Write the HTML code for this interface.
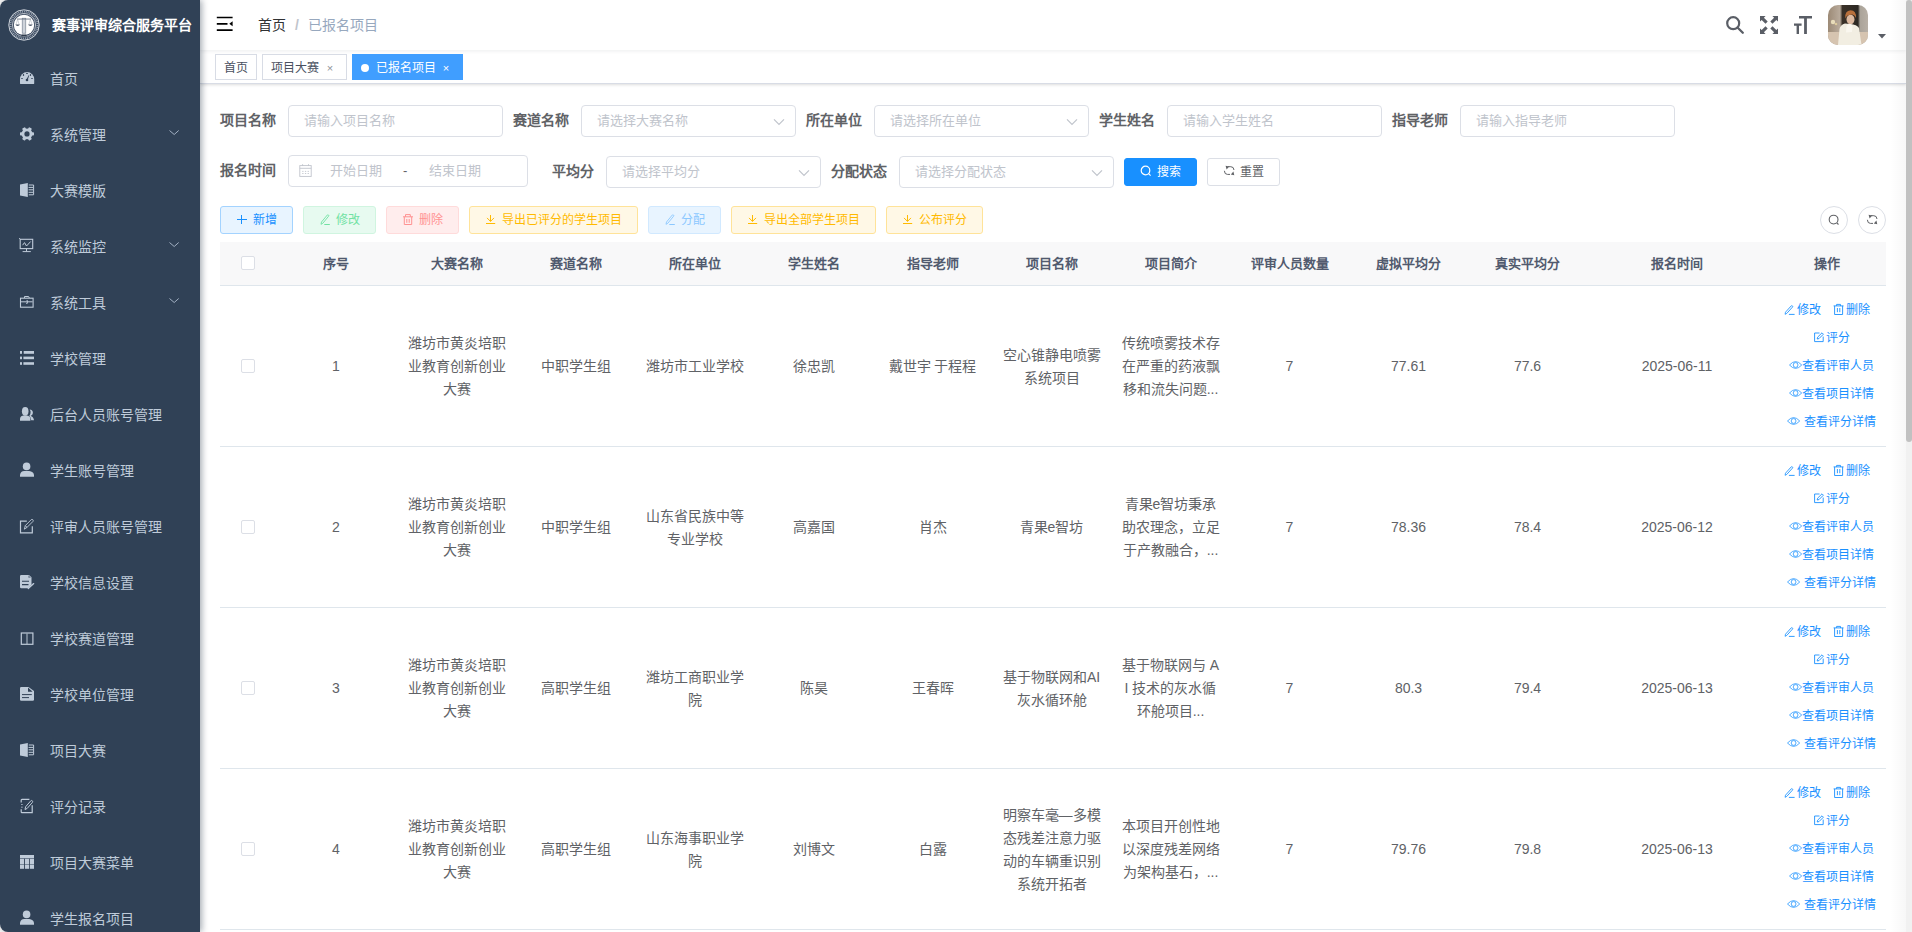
<!DOCTYPE html>
<html lang="zh-CN"><head><meta charset="utf-8">
<style>
*{box-sizing:border-box;margin:0;padding:0}
html,body{width:1912px;height:932px;overflow:hidden;background:#f5f5f5}
body{font-family:"Liberation Sans",sans-serif;font-size:14px;color:#606266;position:relative}
.abs{position:absolute}
#sidebar{position:absolute;left:0;top:0;width:200px;height:932px;background:#304156;border-radius:8px 0 0 8px;box-shadow:2px 0 6px rgba(0,21,41,.35);z-index:3}
#sidebar .logo{position:absolute;left:8px;top:9px;width:32px;height:32px}
#sidebar .title{position:absolute;left:52px;top:0;height:50px;line-height:50px;color:#fff;font-weight:600;font-size:14px;white-space:nowrap}
.mi{position:absolute;left:0;width:200px;height:56px;line-height:56px;color:#bfcbd9;font-size:14px}
.mi .ic{position:absolute;left:16px;top:17px;width:22px;height:22px}
.mi .tx{position:absolute;left:50px;top:1px}
.mi .arr{position:absolute;left:168px;top:23px;width:12px;height:8px}
#main{position:absolute;left:200px;top:0;width:1706px;height:932px;background:#fff;overflow:hidden}
#scroll{position:absolute;left:1906px;top:0;width:6px;height:932px;background:#f1f1f1}
#scroll .th{position:absolute;left:0;top:0;width:6px;height:442px;background:#c1c1c1;border-radius:3px}

#navbar{position:absolute;left:0;top:0;width:1706px;height:50px;background:#fff;box-shadow:0 1px 4px rgba(0,21,41,.08);z-index:2}
#navbar .bc{position:absolute;left:58px;top:0;line-height:50px;font-size:14px;white-space:nowrap}
#navbar .sep{margin:0 9px;color:#c0c4cc;font-weight:700}
#navbar .avatar{position:absolute;left:1628px;top:5px;width:40px;height:40px;border-radius:10px;background:linear-gradient(90deg,#8a7a66 0%,#c8b59c 20%,#f0ebe0 45%,#efe9dc 60%,#9c8f7c 85%,#6f6658 100%)}
#tags{position:absolute;left:0;top:50px;width:1706px;height:34px;background:#fff;border-bottom:1px solid #d8dce5;box-shadow:0 1px 3px 0 rgba(0,0,0,.12),0 0 3px 0 rgba(0,0,0,.04);z-index:1}
.tag{position:absolute;top:4px;height:26px;line-height:25px;padding-top:1px;border:1px solid #d8dce5;color:#495060;background:#fff;font-size:12px;padding-left:8px;white-space:nowrap}
.tag .x{display:inline-block;width:16px;text-align:center;margin-left:3px;color:#909399;font-size:11px;line-height:24px;vertical-align:top}
.tag.act{background:#409eff;border-color:#409eff;color:#fff}
.tag.act .x{color:#fff}
.tag .dot{display:inline-block;width:8px;height:8px;border-radius:50%;background:#fff;margin-right:7px;vertical-align:0}

.lbl{position:absolute;height:32px;line-height:32px;font-size:14px;font-weight:700;color:#606266;white-space:nowrap}
.inp{position:absolute;height:32px;line-height:30px;border:1px solid #dcdfe6;border-radius:4px;background:#fff;color:#c0c4cc;font-size:13px;padding-left:15px;white-space:nowrap}
.inp .chev{position:absolute;right:10px;top:12px}
.btn{position:absolute;height:28px;line-height:26px;border:1px solid;border-radius:3px;font-size:12px;text-align:center;white-space:nowrap}
.btn .bi{display:inline-block;vertical-align:-1px;margin-right:5px}
.circ{position:absolute;width:28px;height:28px;border:1px solid #dcdfe6;border-radius:50%;background:#fff}

#table{position:absolute;left:20px;top:0;width:1666px;height:932px}
#thead{position:absolute;left:0;top:242px;width:1666px;height:44px;background:#f8f8f9;border-bottom:1px solid #dfe6ec}
.th{position:absolute;top:0;height:43px;line-height:43px;text-align:center;font-size:13px;font-weight:700;color:#515a6e;white-space:nowrap}
.cb{position:absolute;width:14px;height:14px;border:1px solid #dcdfe6;border-radius:2px;background:#fff}
.tr{position:absolute;left:0;width:1666px;height:161px;border-bottom:1px solid #dfe6ec}
.td{position:absolute;line-height:23px;text-align:center;font-size:14px;color:#606266;white-space:nowrap}
.op{position:absolute;box-sizing:border-box;width:119px;height:20px;line-height:20px;text-align:center;font-size:12px;color:#1890ff;white-space:nowrap}
.op svg{display:inline-block;vertical-align:-1px;margin-right:1px}
</style></head><body>
<div id="sidebar">
  <svg class="logo" viewBox="0 0 32 32"><circle cx="16" cy="16" r="15.8" fill="#3b4a5f"/><circle cx="16" cy="16" r="15.2" fill="none" stroke="#dfe4ea" stroke-width="0.9"/><circle cx="16" cy="16" r="13.4" fill="none" stroke="#9ba6b4" stroke-width="2" stroke-dasharray="0.9 1"/><circle cx="16" cy="16" r="11.6" fill="none" stroke="#e6eaef" stroke-width="0.7"/><circle cx="16" cy="16" r="10.2" fill="#fff"/><rect x="14.2" y="9.2" width="3.6" height="15" fill="#cfd4db" stroke="#6f7a89" stroke-width="0.6"/><rect x="9" y="9.6" width="14" height="0.9" fill="#6d7786"/><path d="M9.6 10.3 L8 15.6 M9.6 10.3 L11.2 15.6 M22.4 10.3 L20.8 15.6 M22.4 10.3 L24 15.6" stroke="#9aa3af" stroke-width="0.45"/><path d="M7.4 15.6 H11.8 Q11.4 17 9.6 17 Q7.8 17 7.4 15.6Z M20.2 15.6 H24.6 Q24.2 17 22.4 17 Q20.6 17 20.2 15.6Z" fill="#4a5566"/><path d="M14 25.6 H18 L19 27.6 H13Z" fill="#2f3b4c"/></svg>
  <div class="title">赛事评审综合服务平台</div>
<div class="mi" style="top:50px"><svg class="ic" viewBox="0 0 22 22"><path d="M4 16.6 L4 12.2 A7.1 7.1 0 0 1 18.2 12.2 L18.2 16.6 Q18.2 17 17.8 17 L4.4 17 Q4 17 4 16.6Z" fill="#bfcbd9"/><g fill="#304156"><ellipse cx="6" cy="11.5" rx="0.9" ry="0.6"/><ellipse cx="7.5" cy="8" rx="0.7" ry="0.9"/><ellipse cx="11" cy="6.4" rx="0.9" ry="0.6"/><ellipse cx="14.5" cy="8" rx="0.7" ry="0.9"/><ellipse cx="16" cy="11.5" rx="0.9" ry="0.6"/><circle cx="11" cy="13" r="1.3"/><path d="M10.4 12.8 L12.6 8.3 L13.2 8.5 L11.6 13.2Z"/></g></svg><span class="tx">首页</span></div>
<div class="mi" style="top:106px"><svg class="ic" viewBox="0 0 22 22"><g fill="#bfcbd9"><rect x="9.3" y="3.9" width="3.4" height="4" rx="0.8" transform="rotate(30 11 10.9)"/><rect x="9.3" y="3.9" width="3.4" height="4" rx="0.8" transform="rotate(90 11 10.9)"/><rect x="9.3" y="3.9" width="3.4" height="4" rx="0.8" transform="rotate(150 11 10.9)"/><rect x="9.3" y="3.9" width="3.4" height="4" rx="0.8" transform="rotate(210 11 10.9)"/><rect x="9.3" y="3.9" width="3.4" height="4" rx="0.8" transform="rotate(270 11 10.9)"/><rect x="9.3" y="3.9" width="3.4" height="4" rx="0.8" transform="rotate(330 11 10.9)"/><circle cx="11" cy="10.9" r="5.4"/></g><circle cx="11" cy="10.9" r="2.6" fill="#304156"/></svg><span class="tx">系统管理</span><svg class="arr" viewBox="0 0 12 8"><path d="M1.5 1.5 L6.2 5.5 L10.7 1.5" fill="none" stroke="#a3b1c4" stroke-width="1"/></svg></div>
<div class="mi" style="top:162px"><svg class="ic" viewBox="0 0 22 22"><path d="M4 5.5 L11.8 4 L11.8 18 L4 16.6Z" fill="#bfcbd9"/><path d="M12.8 6 H17.6 V15.8 H12.8" fill="none" stroke="#bfcbd9" stroke-width="1"/><path d="M12.6 8.4 H17 M12.6 10.8 H17 M12.6 13.3 H17" stroke="#bfcbd9" stroke-width="1"/></svg><span class="tx">大赛模版</span></div>
<div class="mi" style="top:218px"><svg class="ic" viewBox="0 0 22 22"><rect x="4.2" y="4.3" width="12.5" height="9.3" fill="none" stroke="#bfcbd9" stroke-width="1.1"/><path d="M3.2 3 L4.2 4.3" stroke="#bfcbd9" stroke-width="0.9"/><path d="M6.6 10.2 L8.5 7.6 L10.5 11 L14.7 6.5" fill="none" stroke="#bfcbd9" stroke-width="1"/><path d="M10.5 13.6 V16.4 M6.6 16.6 H14.8" stroke="#bfcbd9" stroke-width="1"/></svg><span class="tx">系统监控</span><svg class="arr" viewBox="0 0 12 8"><path d="M1.5 1.5 L6.2 5.5 L10.7 1.5" fill="none" stroke="#a3b1c4" stroke-width="1"/></svg></div>
<div class="mi" style="top:274px"><svg class="ic" viewBox="0 0 22 22"><rect x="4.5" y="7.2" width="12.6" height="9" fill="none" stroke="#bfcbd9" stroke-width="1.1"/><path d="M8.5 7 V5.5 H12.6 L13.3 7" fill="none" stroke="#bfcbd9" stroke-width="1"/><path d="M5 10.8 H16.6" stroke="#bfcbd9" stroke-width="1"/><path d="M10.6 9.5 H11.4 V12.3 H10" fill="none" stroke="#bfcbd9" stroke-width="0.9"/></svg><span class="tx">系统工具</span><svg class="arr" viewBox="0 0 12 8"><path d="M1.5 1.5 L6.2 5.5 L10.7 1.5" fill="none" stroke="#a3b1c4" stroke-width="1"/></svg></div>
<div class="mi" style="top:330px"><svg class="ic" viewBox="0 0 22 22"><g fill="#bfcbd9"><rect x="4" y="4" width="2" height="2.8"/><rect x="7.7" y="4" width="10.3" height="2.8"/><rect x="4" y="9.6" width="2" height="2.6"/><rect x="7.4" y="9.6" width="10.6" height="2.6"/><rect x="4" y="15.2" width="2" height="2.6"/><rect x="7.4" y="15.2" width="10.6" height="2.6"/></g></svg><span class="tx">学校管理</span></div>
<div class="mi" style="top:386px"><svg class="ic" viewBox="0 0 22 22"><g fill="#bfcbd9"><ellipse cx="9.2" cy="8.3" rx="3.3" ry="4.4"/><path d="M4 17.8 L4 15.5 Q4.5 12.8 8 12.6 L10.6 12.6 Q14 12.9 14.4 15.5 L14.4 17.8Z"/><path d="M13.6 6.6 Q16.9 6.9 16.9 10 Q16.8 12.2 14.6 12.9 Q17.6 13.8 18 17.2 L15.2 17.2 Q15 14.6 13.3 13 Q14.8 11 14.6 8.8 Q14.4 7.4 13.6 6.6Z"/></g></svg><span class="tx">后台人员账号管理</span></div>
<div class="mi" style="top:442px"><svg class="ic" viewBox="0 0 22 22"><g fill="#bfcbd9"><circle cx="10.6" cy="7.4" r="3.8"/><path d="M4 17.8 L4 16 Q4.6 12.3 8.2 12.1 L13.2 12.1 Q17.4 12.5 18 16 L18 17.8Z"/></g></svg><span class="tx">学生账号管理</span></div>
<div class="mi" style="top:498px"><svg class="ic" viewBox="0 0 22 22"><path d="M10.8 6.2 H4.5 V17.8 H16.3 V11.2" fill="none" stroke="#bfcbd9" stroke-width="1.2"/><path d="M8.3 14.2 L9.3 10.6 L15.3 4.6 Q16 4 16.8 4.7 Q17.6 5.6 17 6.4 L11 12.4 Z M9.4 10.6 L11 12.4" fill="none" stroke="#bfcbd9" stroke-width="0.9" stroke-linejoin="round"/></svg><span class="tx">评审人员账号管理</span></div>
<div class="mi" style="top:554px"><svg class="ic" viewBox="0 0 22 22"><path d="M5.2 4 H13 L15.5 6.2 V13.5 L12.5 17.2 H5.2 Q4 17.2 4 16 V5.2 Q4 4 5.2 4Z" fill="#bfcbd9"/><path d="M6 10.2 H13 M6 13.6 H12.5" stroke="#304156" stroke-width="1.1"/><path d="M12.3 17.6 L17.7 12.6" stroke="#bfcbd9" stroke-width="1.3" stroke-linecap="round"/><path d="M12.4 4.3 V6.8 H15" fill="#304156" opacity="0.6"/></svg><span class="tx">学校信息设置</span></div>
<div class="mi" style="top:610px"><svg class="ic" viewBox="0 0 22 22"><rect x="5.3" y="6" width="11.6" height="11.3" fill="none" stroke="#bfcbd9" stroke-width="1.2"/><path d="M11 6.5 V17" stroke="#bfcbd9" stroke-width="1.2" opacity="0.8"/></svg><span class="tx">学校赛道管理</span></div>
<div class="mi" style="top:666px"><svg class="ic" viewBox="0 0 22 22"><path d="M5.2 4 H12.5 L18 8 V16.6 Q18 17.8 16.8 17.8 H5.2 Q4 17.8 4 16.6 V5.2 Q4 4 5.2 4Z" fill="#bfcbd9"/><path d="M12 4.6 L12 8.8 L16.6 8.8Z" fill="#304156"/><path d="M6 11.6 H15.8 M6 14.6 H13" stroke="#304156" stroke-width="1"/></svg><span class="tx">学校单位管理</span></div>
<div class="mi" style="top:722px"><svg class="ic" viewBox="0 0 22 22"><path d="M4 5.5 L11.8 4 L11.8 18 L4 16.6Z" fill="#bfcbd9"/><path d="M12.8 6 H17.6 V15.8 H12.8" fill="none" stroke="#bfcbd9" stroke-width="1"/><path d="M12.6 8.4 H17 M12.6 10.8 H17 M12.6 13.3 H17" stroke="#bfcbd9" stroke-width="1"/></svg><span class="tx">项目大赛</span></div>
<div class="mi" style="top:778px"><svg class="ic" viewBox="0 0 22 22"><path d="M13.4 4.3 H6 Q5.2 4.3 5.2 5.2 V7.5 M5.2 14.2 V16.8 Q5.2 17.7 6 17.7 H16.2 V10.2" fill="none" stroke="#bfcbd9" stroke-width="1.2"/><path d="M5 9.5 H6.8 M5 12.2 H6.8" stroke="#bfcbd9" stroke-width="1" opacity="0.7"/><path d="M9 14.5 L9.6 11.8 L14.8 5.8 Q15.5 5.1 16.3 5.8 Q17 6.6 16.4 7.4 L11.2 13.4Z" fill="none" stroke="#bfcbd9" stroke-width="1" stroke-linejoin="round"/></svg><span class="tx">评分记录</span></div>
<div class="mi" style="top:834px"><svg class="ic" viewBox="0 0 22 22"><g fill="#bfcbd9"><rect x="4" y="4" width="14" height="3.3"/><rect x="4" y="7.8" width="4.1" height="5.6"/><rect x="9" y="7.8" width="4.1" height="5.6"/><rect x="13.9" y="7.8" width="4.1" height="5.6"/><rect x="4" y="13.8" width="4.1" height="4"/><rect x="9" y="13.8" width="4.1" height="4"/><rect x="13.9" y="13.8" width="4.1" height="4"/></g></svg><span class="tx">项目大赛菜单</span></div>
<div class="mi" style="top:890px"><svg class="ic" viewBox="0 0 22 22"><g fill="#bfcbd9"><circle cx="10.6" cy="7.4" r="3.8"/><path d="M4 17.8 L4 16 Q4.6 12.3 8.2 12.1 L13.2 12.1 Q17.4 12.5 18 16 L18 17.8Z"/></g></svg><span class="tx">学生报名项目</span></div>
</div>
<div id="main">
  <!-- navbar -->
  <div id="navbar">
    <svg class="abs" style="left:16px;top:16px" width="18" height="16" viewBox="0 0 18 16"><path d="M0.8 1.5 H16.6 M0.8 7.8 H11.5 M0.8 14.2 H16.6" stroke="#000" stroke-width="1.7"/><path d="M16.6 5.3 L13.3 7.8 L16.6 10.3Z" fill="#000"/></svg>
    <div class="bc"><span style="color:#303133">首页</span><span class="sep">/</span><span style="color:#97a8be">已报名项目</span></div>
    <svg class="abs" style="left:1525px;top:15px" width="20" height="20" viewBox="0 0 20 20"><circle cx="8.2" cy="8.2" r="6" fill="none" stroke="#5a5e66" stroke-width="2.2"/><path d="M12.5 12.5 L17.8 17.8" stroke="#5a5e66" stroke-width="2.3" stroke-linecap="round"/></svg>
    <svg class="abs" style="left:1559px;top:15px" width="20" height="20" viewBox="0 0 20 20"><g fill="#5a5e66"><path d="M1 1 H6.6 L4.9 2.7 L8.7 6.5 L6.5 8.7 L2.7 4.9 L1 6.6Z"/><path d="M19 1 V6.6 L17.3 4.9 L13.5 8.7 L11.3 6.5 L15.1 2.7 L13.4 1Z"/><path d="M1 19 V13.4 L2.7 15.1 L6.5 11.3 L8.7 13.5 L4.9 17.3 L6.6 19Z"/><path d="M19 19 H13.4 L15.1 17.3 L11.3 13.5 L13.5 11.3 L17.3 15.1 L19 13.4Z"/></g></svg>
    <svg class="abs" style="left:1593px;top:15px" width="20" height="20" viewBox="0 0 20 20"><g fill="#5a5e66"><path d="M6 1 H19 V3.6 H13.9 V19 H11.1 V3.6 H6Z"/><path d="M1 8.6 H8.6 V10.8 H6 V19 H3.6 V10.8 H1Z"/></g></svg>
    <svg class="abs" style="left:1628px;top:5px" width="40" height="40" viewBox="0 0 40 40"><defs><clipPath id="avc"><rect x="0" y="0" width="40" height="40" rx="10"/></clipPath><linearGradient id="avbg" x1="0" x2="1" y1="0" y2="0"><stop offset="0" stop-color="#9c8a76"/><stop offset="0.3" stop-color="#b9ab9c"/><stop offset="0.36" stop-color="#3a3128"/><stop offset="0.75" stop-color="#2c2823"/><stop offset="0.8" stop-color="#aaa399"/><stop offset="1" stop-color="#b8b0a6"/></linearGradient></defs><g clip-path="url(#avc)"><rect width="40" height="40" fill="url(#avbg)"/><rect x="0" y="27" width="40" height="13" fill="#d6c4b0"/><circle cx="5" cy="17" r="2.2" fill="#efe3c0" opacity="0.9"/><circle cx="8" cy="19" r="1.3" fill="#e8d5a0" opacity="0.8"/><path d="M10 40 L11.5 24 Q12.5 19.5 17 18.5 L22 19 Q29 19.5 31 23 L33.5 40Z" fill="#f2eee2"/><ellipse cx="22.5" cy="14.5" rx="4" ry="4.8" fill="#dcb9a0"/><path d="M17.2 13.5 Q16.6 5.5 22.6 5.2 Q28.4 5.2 28 13 Q27 10.2 24.5 9.6 Q21 9.8 19.2 10.8 Q18 12 17.2 13.5Z" fill="#b8703c"/><path d="M18.5 21 Q21.5 17.5 24.5 20.5 L24 27 L18 27.5Z" fill="#faf7ef"/></g></svg>
    <svg class="abs" style="left:1677px;top:33px" width="10" height="6" viewBox="0 0 10 6"><path d="M1 1 H9 L5 5.5Z" fill="#5a5e66"/></svg>
  </div>
  <!-- form -->
  <div class="lbl" style="left:20px;top:104px">项目名称</div>
  <div class="inp" style="left:88px;top:105px;width:215px">请输入项目名称</div>
  <div class="lbl" style="left:313px;top:104px">赛道名称</div>
  <div class="inp sel" style="left:381px;top:105px;width:215px">请选择大赛名称<svg class="chev" width="12" height="8" viewBox="0 0 12 8"><path d="M1 1.3 L6 6.3 L11 1.3" fill="none" stroke="#c0c4cc" stroke-width="1.2"/></svg></div>
  <div class="lbl" style="left:606px;top:104px">所在单位</div>
  <div class="inp sel" style="left:674px;top:105px;width:215px">请选择所在单位<svg class="chev" width="12" height="8" viewBox="0 0 12 8"><path d="M1 1.3 L6 6.3 L11 1.3" fill="none" stroke="#c0c4cc" stroke-width="1.2"/></svg></div>
  <div class="lbl" style="left:899px;top:104px">学生姓名</div>
  <div class="inp" style="left:967px;top:105px;width:215px">请输入学生姓名</div>
  <div class="lbl" style="left:1192px;top:104px">指导老师</div>
  <div class="inp" style="left:1260px;top:105px;width:215px">请输入指导老师</div>

  <div class="lbl" style="left:20px;top:154px">报名时间</div>
  <div class="inp" style="left:88px;top:155px;width:240px;padding:0">
    <svg class="abs" style="left:9px;top:8px" width="14" height="14" viewBox="0 0 14 14"><g fill="none" stroke="#c0c4cc" stroke-width="0.9"><rect x="1.8" y="1.6" width="11.4" height="10.8"/><path d="M1.8 4.3 H13.2 M4.6 0.2 V2 M10.5 0.2 V2"/></g><g fill="#c0c4cc"><rect x="4.2" y="6.9" width="1.3" height="0.9"/><rect x="6.9" y="6.9" width="1.3" height="0.9"/><rect x="9.6" y="6.9" width="1.3" height="0.9"/><rect x="4.2" y="9.1" width="1.3" height="0.9"/><rect x="6.9" y="9.1" width="1.3" height="0.9"/><rect x="9.6" y="9.1" width="1.3" height="0.9"/></g></svg>
    <span class="abs" style="left:41px;top:0">开始日期</span>
    <span class="abs" style="left:114px;top:0;color:#606266">-</span>
    <span class="abs" style="left:140px;top:0">结束日期</span>
  </div>
  <div class="lbl" style="left:338px;top:155px;width:68px;text-align:right;padding-right:12px">平均分</div>
  <div class="inp sel" style="left:406px;top:156px;width:215px">请选择平均分<svg class="chev" width="12" height="8" viewBox="0 0 12 8"><path d="M1 1.3 L6 6.3 L11 1.3" fill="none" stroke="#c0c4cc" stroke-width="1.2"/></svg></div>
  <div class="lbl" style="left:631px;top:155px">分配状态</div>
  <div class="inp sel" style="left:699px;top:156px;width:215px">请选择分配状态<svg class="chev" width="12" height="8" viewBox="0 0 12 8"><path d="M1 1.3 L6 6.3 L11 1.3" fill="none" stroke="#c0c4cc" stroke-width="1.2"/></svg></div>
  <div class="btn" style="left:924px;top:158px;width:73px;background:#1890ff;border-color:#1890ff;color:#fff"><svg class="bi" width="12" height="12" viewBox="0 0 12 12"><circle cx="5.5" cy="5.5" r="4.3" fill="none" stroke="#fff" stroke-width="1.2"/><path d="M8.6 8.6 L10.6 10.6" stroke="#fff" stroke-width="1.2"/></svg>搜索</div>
  <div class="btn" style="left:1007px;top:158px;width:73px;background:#fff;border-color:#dcdfe6;color:#606266"><svg class="bi" width="12" height="12" viewBox="0 0 12 12"><g transform="translate(0,-0.8)"><path d="M5 2.5 H7.8 Q10.8 2.5 11 5.8 M7 10.2 H4.4 Q1.5 10.2 1.4 6.6" fill="none" stroke="#606266" stroke-width="1"/><path d="M2.6 1.6 L6.2 2.4 L3.6 5.2Z M11.3 11 L7.8 10.2 L10.4 7.4Z" fill="#606266"/></g></svg>重置</div>

  <!-- toolbar -->
  <div class="btn pl" style="left:20px;top:206px;width:73px;background:#e8f4ff;border-color:#a3d3ff;color:#1890ff"><svg class="bi" width="12" height="12" viewBox="0 0 12 12" shape-rendering="crispEdges"><path d="M5.5 1.5 V10.5 M0.5 6 H10.5" stroke="#1890ff" stroke-width="1"/></svg>新增</div>
  <div class="btn pl" style="left:103px;top:206px;width:73px;background:#e7faf0;border-color:#d0f5e0;color:#71e2a3"><svg class="bi" width="12" height="12" viewBox="0 0 12 12"><path d="M2 11.3 L2.5 9 L8.3 2 Q8.9 1.4 9.5 2 Q10.1 2.6 9.6 3.2 L3.9 10.2 Z" fill="none" stroke="#71e2a3" stroke-width="0.9"/><path d="M5.3 11.5 H10.8" stroke="#71e2a3" stroke-width="1"/></svg>修改</div>
  <div class="btn pl" style="left:186px;top:206px;width:73px;background:#ffeded;border-color:#ffdbdb;color:#ff9292"><svg class="bi" width="12" height="12" viewBox="0 0 12 12"><path d="M1 3.8 H11 M3.5 3.8 V1.6 H8.3 V3.8 M2.3 3.8 V11.5 H9.7 V3.8 M4.8 6 V9.8 M7.2 6 V9.8" fill="none" stroke="#ff9292" stroke-width="1"/></svg>删除</div>
  <div class="btn pl" style="left:269px;top:206px;width:169px;background:#fff8e6;border-color:#ffe399;color:#ffba00"><svg class="bi" width="12" height="12" viewBox="0 0 12 12"><path d="M5.5 2 V8.4 M2 4.9 L5.5 8.4 L9 4.9 M1 10.5 H10.2" fill="none" stroke="#ffba00" stroke-width="1"/></svg>导出已评分的学生项目</div>
  <div class="btn pl" style="left:448px;top:206px;width:73px;background:#e8f4ff;border-color:#d1e9ff;color:#8cc8ff"><svg class="bi" width="12" height="12" viewBox="0 0 12 12"><path d="M2 11.3 L2.5 9 L8.3 2 Q8.9 1.4 9.5 2 Q10.1 2.6 9.6 3.2 L3.9 10.2 Z" fill="none" stroke="#8cc8ff" stroke-width="0.9"/><path d="M5.3 11.5 H10.8" stroke="#8cc8ff" stroke-width="1"/></svg>分配</div>
  <div class="btn pl" style="left:531px;top:206px;width:145px;background:#fff8e6;border-color:#ffe399;color:#ffba00"><svg class="bi" width="12" height="12" viewBox="0 0 12 12"><path d="M5.5 2 V8.4 M2 4.9 L5.5 8.4 L9 4.9 M1 10.5 H10.2" fill="none" stroke="#ffba00" stroke-width="1"/></svg>导出全部学生项目</div>
  <div class="btn pl" style="left:686px;top:206px;width:97px;background:#fff8e6;border-color:#ffe399;color:#ffba00"><svg class="bi" width="12" height="12" viewBox="0 0 12 12"><path d="M5.5 2 V8.4 M2 4.9 L5.5 8.4 L9 4.9 M1 10.5 H10.2" fill="none" stroke="#ffba00" stroke-width="1"/></svg>公布评分</div>
  <div class="circ" style="left:1620px;top:206px"><svg width="12" height="12" viewBox="0 0 12 12" style="position:absolute;left:7px;top:7px"><circle cx="5.6" cy="5.6" r="4.4" fill="none" stroke="#606266" stroke-width="1.1"/><path d="M8.8 8.8 L10.5 10.5" stroke="#606266" stroke-width="1.1"/></svg></div>
  <div class="circ" style="left:1658px;top:206px"><svg width="12" height="12" viewBox="0 0 12 12" style="position:absolute;left:7px;top:7px"><g transform="translate(0,-0.8)"><path d="M5 2.5 H7.8 Q10.8 2.5 11 5.8 M7 10.2 H4.4 Q1.5 10.2 1.4 6.6" fill="none" stroke="#606266" stroke-width="1"/><path d="M2.6 1.6 L6.2 2.4 L3.6 5.2Z M11.3 11 L7.8 10.2 L10.4 7.4Z" fill="#606266"/></g></svg></div>

<div id="table">
<div id="thead">
<div class="cb" style="left:21px;top:14px"></div>
<div class="th" style="left:55px;width:122px">序号</div>
<div class="th" style="left:177px;width:119px">大赛名称</div>
<div class="th" style="left:296px;width:119px">赛道名称</div>
<div class="th" style="left:415px;width:119px">所在单位</div>
<div class="th" style="left:534px;width:119px">学生姓名</div>
<div class="th" style="left:653px;width:119px">指导老师</div>
<div class="th" style="left:772px;width:119px">项目名称</div>
<div class="th" style="left:891px;width:119px">项目简介</div>
<div class="th" style="left:1010px;width:119px">评审人员数量</div>
<div class="th" style="left:1129px;width:119px">虚拟平均分</div>
<div class="th" style="left:1248px;width:119px">真实平均分</div>
<div class="th" style="left:1367px;width:180px">报名时间</div>
<div class="th" style="left:1547px;width:119px">操作</div>
</div>
<div class="tr" style="top:286px">
<div class="cb" style="left:21px;top:73px"></div>
<div class="td" style="left:55px;width:122px;top:69.0px">1</div>
<div class="td" style="left:177px;width:119px;top:46.0px">潍坊市黄炎培职<br>业教育创新创业<br>大赛</div>
<div class="td" style="left:296px;width:119px;top:69.0px">中职学生组</div>
<div class="td" style="left:415px;width:119px;top:69.0px">潍坊市工业学校</div>
<div class="td" style="left:534px;width:119px;top:69.0px">徐忠凯</div>
<div class="td" style="left:653px;width:119px;top:69.0px">戴世宇 于程程</div>
<div class="td" style="left:772px;width:119px;top:57.5px">空心锥静电喷雾<br>系统项目</div>
<div class="td" style="left:891px;width:119px;top:46.0px">传统喷雾技术存<br>在严重的药液飘<br>移和流失问题...</div>
<div class="td" style="left:1010px;width:119px;top:69.0px">7</div>
<div class="td" style="left:1129px;width:119px;top:69.0px">77.61</div>
<div class="td" style="left:1248px;width:119px;top:69.0px">77.6</div>
<div class="td" style="left:1367px;width:180px;top:69.0px">2025-06-11</div>
<div class="op" style="left:1547px;top:14px;padding-left:1px"><span class="ln"><svg width="12" height="12" viewBox="0 0 12 12"><path d="M1.1 11.3 L1.5 9.2 L7.2 2.9 Q7.8 2.3 8.4 2.9 Q9 3.5 8.5 4.1 L2.8 10.4 Z" fill="none" stroke="#1890ff" stroke-width="0.85"/><path d="M4.9 11.4 H10.6" stroke="#1890ff" stroke-width="0.9"/></svg>修改</span><span class="ln" style="margin-left:12px"><svg width="12" height="12" viewBox="0 0 12 12"><path d="M0.6 2.9 H10.5 M3.6 2.9 V1.4 H7.5 V2.9 M1.6 2.9 V11.5 H9.6 V2.9 M4.4 5 V9.2 M6.8 5 V9.2" fill="none" stroke="#1890ff" stroke-width="0.9"/></svg>删除</span></div>
<div class="op" style="left:1547px;top:42px;padding-left:10px"><span class="ln"><svg width="12" height="12" viewBox="0 0 12 12"><path d="M6.5 2 H1.6 V10.6 H10.2 V5.6" fill="none" stroke="#1890ff" stroke-width="0.9"/><path d="M4.2 8 L4.6 6.2 L9 1.8 L10.4 3.2 L6 7.6Z" fill="none" stroke="#1890ff" stroke-width="0.9"/></svg>评分</span></div>
<div class="op" style="left:1547px;top:70px;padding-left:9px"><span class="ln"><svg width="13" height="12" viewBox="0 0 13 12" style="margin-left:1px;margin-right:0"><path d="M0.5 6 Q6.6 -0.8 12.7 6 Q6.6 12.8 0.5 6Z" fill="none" stroke="#1890ff" stroke-width="0.75"/><circle cx="6.6" cy="6" r="2.4" fill="none" stroke="#1890ff" stroke-width="0.75"/></svg>查看评审人员</span></div>
<div class="op" style="left:1547px;top:98px;padding-left:9px"><span class="ln"><svg width="13" height="12" viewBox="0 0 13 12" style="margin-left:1px;margin-right:0"><path d="M0.5 6 Q6.6 -0.8 12.7 6 Q6.6 12.8 0.5 6Z" fill="none" stroke="#1890ff" stroke-width="0.75"/><circle cx="6.6" cy="6" r="2.4" fill="none" stroke="#1890ff" stroke-width="0.75"/></svg>查看项目详情</span></div>
<div class="op" style="left:1547px;top:126px;padding-left:9px"><span class="ln"><svg width="13" height="12" viewBox="0 0 13 12" style="margin-left:1px;margin-right:0"><path d="M0.5 6 Q6.6 -0.8 12.7 6 Q6.6 12.8 0.5 6Z" fill="none" stroke="#1890ff" stroke-width="0.75"/><circle cx="6.6" cy="6" r="2.4" fill="none" stroke="#1890ff" stroke-width="0.75"/></svg>&nbsp;查看评分详情</span></div>
</div>
<div class="tr" style="top:447px">
<div class="cb" style="left:21px;top:73px"></div>
<div class="td" style="left:55px;width:122px;top:69.0px">2</div>
<div class="td" style="left:177px;width:119px;top:46.0px">潍坊市黄炎培职<br>业教育创新创业<br>大赛</div>
<div class="td" style="left:296px;width:119px;top:69.0px">中职学生组</div>
<div class="td" style="left:415px;width:119px;top:57.5px">山东省民族中等<br>专业学校</div>
<div class="td" style="left:534px;width:119px;top:69.0px">高嘉国</div>
<div class="td" style="left:653px;width:119px;top:69.0px">肖杰</div>
<div class="td" style="left:772px;width:119px;top:69.0px">青果e智坊</div>
<div class="td" style="left:891px;width:119px;top:46.0px">青果e智坊秉承<br>助农理念，立足<br>于产教融合，...</div>
<div class="td" style="left:1010px;width:119px;top:69.0px">7</div>
<div class="td" style="left:1129px;width:119px;top:69.0px">78.36</div>
<div class="td" style="left:1248px;width:119px;top:69.0px">78.4</div>
<div class="td" style="left:1367px;width:180px;top:69.0px">2025-06-12</div>
<div class="op" style="left:1547px;top:14px;padding-left:1px"><span class="ln"><svg width="12" height="12" viewBox="0 0 12 12"><path d="M1.1 11.3 L1.5 9.2 L7.2 2.9 Q7.8 2.3 8.4 2.9 Q9 3.5 8.5 4.1 L2.8 10.4 Z" fill="none" stroke="#1890ff" stroke-width="0.85"/><path d="M4.9 11.4 H10.6" stroke="#1890ff" stroke-width="0.9"/></svg>修改</span><span class="ln" style="margin-left:12px"><svg width="12" height="12" viewBox="0 0 12 12"><path d="M0.6 2.9 H10.5 M3.6 2.9 V1.4 H7.5 V2.9 M1.6 2.9 V11.5 H9.6 V2.9 M4.4 5 V9.2 M6.8 5 V9.2" fill="none" stroke="#1890ff" stroke-width="0.9"/></svg>删除</span></div>
<div class="op" style="left:1547px;top:42px;padding-left:10px"><span class="ln"><svg width="12" height="12" viewBox="0 0 12 12"><path d="M6.5 2 H1.6 V10.6 H10.2 V5.6" fill="none" stroke="#1890ff" stroke-width="0.9"/><path d="M4.2 8 L4.6 6.2 L9 1.8 L10.4 3.2 L6 7.6Z" fill="none" stroke="#1890ff" stroke-width="0.9"/></svg>评分</span></div>
<div class="op" style="left:1547px;top:70px;padding-left:9px"><span class="ln"><svg width="13" height="12" viewBox="0 0 13 12" style="margin-left:1px;margin-right:0"><path d="M0.5 6 Q6.6 -0.8 12.7 6 Q6.6 12.8 0.5 6Z" fill="none" stroke="#1890ff" stroke-width="0.75"/><circle cx="6.6" cy="6" r="2.4" fill="none" stroke="#1890ff" stroke-width="0.75"/></svg>查看评审人员</span></div>
<div class="op" style="left:1547px;top:98px;padding-left:9px"><span class="ln"><svg width="13" height="12" viewBox="0 0 13 12" style="margin-left:1px;margin-right:0"><path d="M0.5 6 Q6.6 -0.8 12.7 6 Q6.6 12.8 0.5 6Z" fill="none" stroke="#1890ff" stroke-width="0.75"/><circle cx="6.6" cy="6" r="2.4" fill="none" stroke="#1890ff" stroke-width="0.75"/></svg>查看项目详情</span></div>
<div class="op" style="left:1547px;top:126px;padding-left:9px"><span class="ln"><svg width="13" height="12" viewBox="0 0 13 12" style="margin-left:1px;margin-right:0"><path d="M0.5 6 Q6.6 -0.8 12.7 6 Q6.6 12.8 0.5 6Z" fill="none" stroke="#1890ff" stroke-width="0.75"/><circle cx="6.6" cy="6" r="2.4" fill="none" stroke="#1890ff" stroke-width="0.75"/></svg>&nbsp;查看评分详情</span></div>
</div>
<div class="tr" style="top:608px">
<div class="cb" style="left:21px;top:73px"></div>
<div class="td" style="left:55px;width:122px;top:69.0px">3</div>
<div class="td" style="left:177px;width:119px;top:46.0px">潍坊市黄炎培职<br>业教育创新创业<br>大赛</div>
<div class="td" style="left:296px;width:119px;top:69.0px">高职学生组</div>
<div class="td" style="left:415px;width:119px;top:57.5px">潍坊工商职业学<br>院</div>
<div class="td" style="left:534px;width:119px;top:69.0px">陈昊</div>
<div class="td" style="left:653px;width:119px;top:69.0px">王春晖</div>
<div class="td" style="left:772px;width:119px;top:57.5px">基于物联网和AI<br>灰水循环舱</div>
<div class="td" style="left:891px;width:119px;top:46.0px">基于物联网与 A<br>I 技术的灰水循<br>环舱项目...</div>
<div class="td" style="left:1010px;width:119px;top:69.0px">7</div>
<div class="td" style="left:1129px;width:119px;top:69.0px">80.3</div>
<div class="td" style="left:1248px;width:119px;top:69.0px">79.4</div>
<div class="td" style="left:1367px;width:180px;top:69.0px">2025-06-13</div>
<div class="op" style="left:1547px;top:14px;padding-left:1px"><span class="ln"><svg width="12" height="12" viewBox="0 0 12 12"><path d="M1.1 11.3 L1.5 9.2 L7.2 2.9 Q7.8 2.3 8.4 2.9 Q9 3.5 8.5 4.1 L2.8 10.4 Z" fill="none" stroke="#1890ff" stroke-width="0.85"/><path d="M4.9 11.4 H10.6" stroke="#1890ff" stroke-width="0.9"/></svg>修改</span><span class="ln" style="margin-left:12px"><svg width="12" height="12" viewBox="0 0 12 12"><path d="M0.6 2.9 H10.5 M3.6 2.9 V1.4 H7.5 V2.9 M1.6 2.9 V11.5 H9.6 V2.9 M4.4 5 V9.2 M6.8 5 V9.2" fill="none" stroke="#1890ff" stroke-width="0.9"/></svg>删除</span></div>
<div class="op" style="left:1547px;top:42px;padding-left:10px"><span class="ln"><svg width="12" height="12" viewBox="0 0 12 12"><path d="M6.5 2 H1.6 V10.6 H10.2 V5.6" fill="none" stroke="#1890ff" stroke-width="0.9"/><path d="M4.2 8 L4.6 6.2 L9 1.8 L10.4 3.2 L6 7.6Z" fill="none" stroke="#1890ff" stroke-width="0.9"/></svg>评分</span></div>
<div class="op" style="left:1547px;top:70px;padding-left:9px"><span class="ln"><svg width="13" height="12" viewBox="0 0 13 12" style="margin-left:1px;margin-right:0"><path d="M0.5 6 Q6.6 -0.8 12.7 6 Q6.6 12.8 0.5 6Z" fill="none" stroke="#1890ff" stroke-width="0.75"/><circle cx="6.6" cy="6" r="2.4" fill="none" stroke="#1890ff" stroke-width="0.75"/></svg>查看评审人员</span></div>
<div class="op" style="left:1547px;top:98px;padding-left:9px"><span class="ln"><svg width="13" height="12" viewBox="0 0 13 12" style="margin-left:1px;margin-right:0"><path d="M0.5 6 Q6.6 -0.8 12.7 6 Q6.6 12.8 0.5 6Z" fill="none" stroke="#1890ff" stroke-width="0.75"/><circle cx="6.6" cy="6" r="2.4" fill="none" stroke="#1890ff" stroke-width="0.75"/></svg>查看项目详情</span></div>
<div class="op" style="left:1547px;top:126px;padding-left:9px"><span class="ln"><svg width="13" height="12" viewBox="0 0 13 12" style="margin-left:1px;margin-right:0"><path d="M0.5 6 Q6.6 -0.8 12.7 6 Q6.6 12.8 0.5 6Z" fill="none" stroke="#1890ff" stroke-width="0.75"/><circle cx="6.6" cy="6" r="2.4" fill="none" stroke="#1890ff" stroke-width="0.75"/></svg>&nbsp;查看评分详情</span></div>
</div>
<div class="tr" style="top:769px">
<div class="cb" style="left:21px;top:73px"></div>
<div class="td" style="left:55px;width:122px;top:69.0px">4</div>
<div class="td" style="left:177px;width:119px;top:46.0px">潍坊市黄炎培职<br>业教育创新创业<br>大赛</div>
<div class="td" style="left:296px;width:119px;top:69.0px">高职学生组</div>
<div class="td" style="left:415px;width:119px;top:57.5px">山东海事职业学<br>院</div>
<div class="td" style="left:534px;width:119px;top:69.0px">刘博文</div>
<div class="td" style="left:653px;width:119px;top:69.0px">白露</div>
<div class="td" style="left:772px;width:119px;top:34.5px">明察车毫—多模<br>态残差注意力驱<br>动的车辆重识别<br>系统开拓者</div>
<div class="td" style="left:891px;width:119px;top:46.0px">本项目开创性地<br>以深度残差网络<br>为架构基石，...</div>
<div class="td" style="left:1010px;width:119px;top:69.0px">7</div>
<div class="td" style="left:1129px;width:119px;top:69.0px">79.76</div>
<div class="td" style="left:1248px;width:119px;top:69.0px">79.8</div>
<div class="td" style="left:1367px;width:180px;top:69.0px">2025-06-13</div>
<div class="op" style="left:1547px;top:14px;padding-left:1px"><span class="ln"><svg width="12" height="12" viewBox="0 0 12 12"><path d="M1.1 11.3 L1.5 9.2 L7.2 2.9 Q7.8 2.3 8.4 2.9 Q9 3.5 8.5 4.1 L2.8 10.4 Z" fill="none" stroke="#1890ff" stroke-width="0.85"/><path d="M4.9 11.4 H10.6" stroke="#1890ff" stroke-width="0.9"/></svg>修改</span><span class="ln" style="margin-left:12px"><svg width="12" height="12" viewBox="0 0 12 12"><path d="M0.6 2.9 H10.5 M3.6 2.9 V1.4 H7.5 V2.9 M1.6 2.9 V11.5 H9.6 V2.9 M4.4 5 V9.2 M6.8 5 V9.2" fill="none" stroke="#1890ff" stroke-width="0.9"/></svg>删除</span></div>
<div class="op" style="left:1547px;top:42px;padding-left:10px"><span class="ln"><svg width="12" height="12" viewBox="0 0 12 12"><path d="M6.5 2 H1.6 V10.6 H10.2 V5.6" fill="none" stroke="#1890ff" stroke-width="0.9"/><path d="M4.2 8 L4.6 6.2 L9 1.8 L10.4 3.2 L6 7.6Z" fill="none" stroke="#1890ff" stroke-width="0.9"/></svg>评分</span></div>
<div class="op" style="left:1547px;top:70px;padding-left:9px"><span class="ln"><svg width="13" height="12" viewBox="0 0 13 12" style="margin-left:1px;margin-right:0"><path d="M0.5 6 Q6.6 -0.8 12.7 6 Q6.6 12.8 0.5 6Z" fill="none" stroke="#1890ff" stroke-width="0.75"/><circle cx="6.6" cy="6" r="2.4" fill="none" stroke="#1890ff" stroke-width="0.75"/></svg>查看评审人员</span></div>
<div class="op" style="left:1547px;top:98px;padding-left:9px"><span class="ln"><svg width="13" height="12" viewBox="0 0 13 12" style="margin-left:1px;margin-right:0"><path d="M0.5 6 Q6.6 -0.8 12.7 6 Q6.6 12.8 0.5 6Z" fill="none" stroke="#1890ff" stroke-width="0.75"/><circle cx="6.6" cy="6" r="2.4" fill="none" stroke="#1890ff" stroke-width="0.75"/></svg>查看项目详情</span></div>
<div class="op" style="left:1547px;top:126px;padding-left:9px"><span class="ln"><svg width="13" height="12" viewBox="0 0 13 12" style="margin-left:1px;margin-right:0"><path d="M0.5 6 Q6.6 -0.8 12.7 6 Q6.6 12.8 0.5 6Z" fill="none" stroke="#1890ff" stroke-width="0.75"/><circle cx="6.6" cy="6" r="2.4" fill="none" stroke="#1890ff" stroke-width="0.75"/></svg>&nbsp;查看评分详情</span></div>
</div>
</div>
  <!-- tags -->
  <div id="tags">
    <div class="tag" style="left:15px;width:42px">首页</div>
    <div class="tag" style="left:62px;width:85px">项目大赛<span class="x">×</span></div>
    <div class="tag act" style="left:152px;width:111px"><span class="dot"></span>已报名项目<span class="x" style="margin-left:2px">×</span></div>
  </div>
</div>

<div class="abs" style="left:1890px;top:0;width:16px;height:932px;z-index:5;background:linear-gradient(to right,rgba(0,0,0,0),rgba(0,0,0,.03))"></div>
<div id="scroll"><div class="th"></div></div>
</body></html>
